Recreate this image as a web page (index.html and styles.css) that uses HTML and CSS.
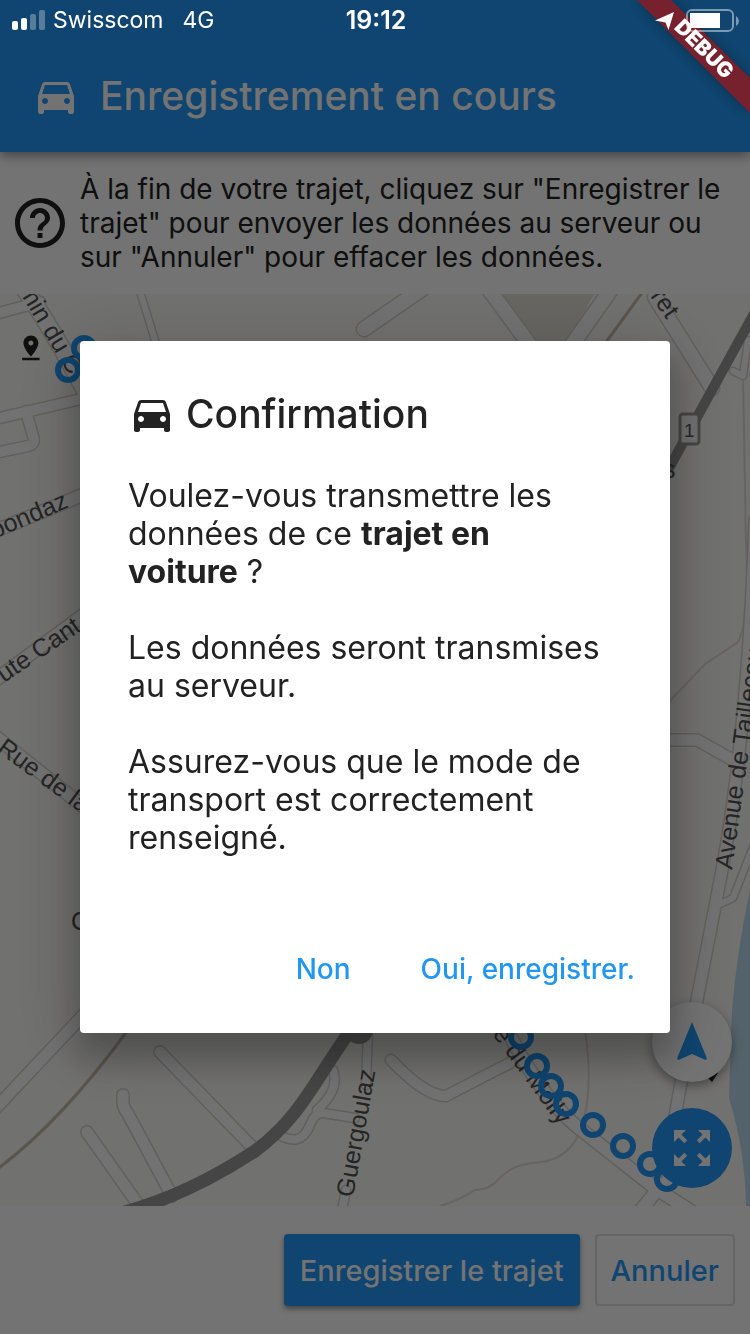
FILE: index.html
```html
<!DOCTYPE html>
<html lang="fr">
<head>
<meta charset="utf-8">
<meta name="viewport" content="width=device-width, initial-scale=1">
<title>Enregistrement en cours</title>
<link rel="stylesheet" href="styles.css">
</head>
<body>
<svg class="symbols" aria-hidden="true">
  <symbol id="car" viewBox="0 0 24 24"><path d="M18.92 6.01C18.72 5.42 18.16 5 17.5 5h-11c-.66 0-1.21.42-1.42 1.01L3 12v8c0 .55.45 1 1 1h1c.55 0 1-.45 1-1v-1h12v1c0 .55.45 1 1 1h1c.55 0 1-.45 1-1v-8l-2.08-5.99zM6.5 16c-.83 0-1.5-.67-1.5-1.5S5.67 13 6.5 13s1.5.67 1.5 1.5S7.33 16 6.5 16zm11 0c-.83 0-1.5-.67-1.5-1.5s.67-1.5 1.5-1.5 1.5.67 1.5 1.5-.67 1.5-1.5 1.5zM5 11l1.5-4.5h11L19 11H5z"/></symbol>
</svg>

<div class="app">
  <header class="app-bar">
    <svg class="icon"><use href="#car"/></svg>
    <h1 class="app-title">Enregistrement en cours</h1>
  </header>

  <section class="hint">
    <svg class="hint-icon" viewBox="0 0 24 24"><path d="M11 18h2v-2h-2v2zm1-16C6.48 2 2 6.48 2 12s4.48 10 10 10 10-4.48 10-10S17.52 2 12 2zm0 18c-4.41 0-8-3.59-8-8s3.59-8 8-8 8 3.59 8 8-3.59 8-8 8zm0-14c-2.21 0-4 1.79-4 4h2c0-1.1.9-2 2-2s2 .9 2 2c0 2-3 1.75-3 5h2c0-2.25 3-2.5 3-5 0-2.21-1.79-4-4-4z"/></svg>
    <p class="hint-text">À la fin de votre trajet, cliquez sur "Enregistrer le trajet" pour envoyer les données au serveur ou sur "Annuler" pour effacer les données.</p>
  </section>

  <main class="map">
    <svg class="map-canvas" viewBox="0 294 750 912" preserveAspectRatio="xMidYMid slice">
      <rect class="land" y="294" width="750" height="912"/>
      <path class="block" d="M497 294h97l-27 50h-36z"/>
      <path class="water" d="M750 890Q737 950 732 1010L729 1098Q745 1150 746 1206h4z"/>
      <path class="thin" d="M665 706 705 664 738 642Q750 620 746 540L743 376M585 1030Q594 1090 581 1130 568 1162 532 1163 510 1166 500 1178 490 1190 475 1190 460 1200 440 1206"/>
      <path class="track" d="M644 290 604 345M-4 1170Q60 1123 128 1030"/>
      <g class="street-edge">
        <path stroke-width="13" d="M-5 314 40 302M-5 419 90 397M26 411l7 25q3 8-5 10L-5 453"/>
        <path stroke-width="19" d="M22 285Q60 340 95 410"/>
        <path stroke-width="9" d="M139 288 158 350"/>
        <path stroke-width="17" d="M364 329 435 280M488 288 532 348M612 288 572 345M655 297 712 388"/>
        <path stroke-width="15" d="M-10 533 90 492M-10 684 90 610M-10 732 90 812"/>
        <path stroke-width="14" d="M-8 1112 90 1008"/>
        <path stroke-width="14" d="M160 1052 255 1150M123 1095v7q0 5 5 12L172 1196M87 1132 142 1210"/>
        <path stroke-width="11" d="M275 1132Q300 1150 310 1125 315 1112 323 1113L355 1118M317 1110Q340 1090 333 1070M368 1030 366 1085M341 1215 346 1190"/>
        <path stroke-width="13" d="M391 1060Q425 1096 446 1096 465 1086 510 1063"/>
        <path stroke-width="15" d="M500 1015Q535 1090 575 1125L655 1188 705 1220M662 1184 637 1215"/>
        <path stroke-width="14" d="M755 520Q748 730 722 870L697 1000 681 1083Q670 1140 668 1180M660 740H697L733 760"/>
        <path stroke-width="9" d="M755 842 733 898 720 904M748 340 743 376 733 371"/>
      </g>
      <g class="street-fill">
        <path stroke-width="10" d="M-5 314 40 302M-5 419 90 397M26 411l7 25q3 8-5 10L-5 453"/>
        <path stroke-width="16" d="M22 285Q60 340 95 410"/>
        <path stroke-width="6" d="M139 288 158 350"/>
        <path stroke-width="14" d="M364 329 435 280M488 288 532 348M612 288 572 345M655 297 712 388"/>
        <path stroke-width="12" d="M-10 533 90 492M-10 684 90 610M-10 732 90 812"/>
        <path stroke-width="11" d="M-8 1112 90 1008"/>
        <path stroke-width="11" d="M160 1052 255 1150M123 1095v7q0 5 5 12L172 1196M87 1132 142 1210"/>
        <path stroke-width="8" d="M275 1132Q300 1150 310 1125 315 1112 323 1113L355 1118M317 1110Q340 1090 333 1070M368 1030 366 1085M341 1215 346 1190"/>
        <path stroke-width="10" d="M391 1060Q425 1096 446 1096 465 1086 510 1063"/>
        <path stroke-width="12" d="M500 1015Q535 1090 575 1125L655 1188 705 1220M662 1184 637 1215"/>
        <path stroke-width="11" d="M755 520Q748 730 722 870L697 1000 681 1083Q670 1140 668 1180M660 740H697L733 760"/>
        <path stroke-width="6" d="M755 842 733 898 720 904M748 340 743 376 733 371"/>
      </g>
      <path class="main-road" d="M756 310 668 470"/>
      <path class="main-road wide" d="M125 1212Q190 1194 255 1151C300 1118 315 1080 348 1034"/>
      <circle class="junction" cx="359" cy="1030" r="14"/>
      <rect class="shield" x="680" y="414" width="19" height="30" rx="3"/>
      <text class="shield-text" x="684" y="437">1</text>
      <g class="street-name">
        <text transform="translate(18 290) rotate(59)">min du C</text>
        <text transform="translate(650 296) rotate(55)">ret</text>
        <text transform="translate(-6 539) rotate(-23)">pondaz</text>
        <text transform="translate(4 683) rotate(-34)">ute Cant</text>
        <text transform="translate(-4 751) rotate(36)">Rue de la</text>
        <text transform="translate(71 930)">C</text>
        <text transform="translate(353 1198) rotate(-80)">Guergoulaz</text>
        <text transform="translate(492 1034) rotate(54)">e du Molly</text>
        <text transform="translate(732 870) rotate(-82)">Avenue de Taillecou</text>
        <text transform="translate(663 478)">s</text>
      </g>
      <g class="trace">
        <circle cx="84" cy="348" r="10"/><circle cx="68" cy="370" r="10"/>
        <circle cx="521" cy="1037" r="10"/><circle cx="537" cy="1066" r="10"/>
        <circle cx="551" cy="1086" r="10"/><circle cx="566" cy="1104" r="10"/>
        <circle cx="593" cy="1125" r="10"/><circle cx="623" cy="1146" r="10"/>
        <circle cx="650" cy="1164" r="10"/><circle cx="667" cy="1179" r="10"/>
      </g>
      <path class="marker" transform="translate(16 333) scale(1.24)" d="M18 8c0-3.31-2.69-6-6-6S6 4.69 6 8c0 4.5 6 11 6 11s6-6.5 6-11zm-8 0c0-1.1.9-2 2-2s2 .9 2 2-.89 2-2 2c-1.1 0-2-.9-2-2zM5 20v2h14v-2H5z"/>
      <path class="marker" d="M708 1078l4 4 6-9-4-3z"/>
    </svg>
    <div class="map-tools">
      <button class="round-button light" aria-label="Recentrer"><svg class="icon" viewBox="0 0 24 24"><path d="M12 2L4.5 20.29l.71.71L12 18l6.79 3 .71-.71z"/></svg></button>
      <button class="round-button" aria-label="Agrandir"><svg class="icon" viewBox="0 0 24 24"><path d="M15 3l2.3 2.3-2.89 2.87 1.42 1.42L18.7 6.7 21 9V3zM3 9l2.3-2.3 2.87 2.89 1.42-1.42L6.7 5.3 9 3H3zm6 12l-2.3-2.3 2.89-2.87-1.42-1.42L5.3 17.3 3 15v6zm12-6l-2.3 2.3-2.87-2.89-1.42 1.42 2.89 2.87L15 21h6z"/></svg></button>
    </div>
  </main>

  <footer class="actions">
    <button class="button primary">Enregistrer le trajet</button>
    <button class="button outlined">Annuler</button>
  </footer>
</div>

<div class="overlay">
  <section class="dialog" role="dialog" aria-modal="true" aria-labelledby="dialog-title">
    <div class="dialog-head">
      <svg class="icon"><use href="#car"/></svg>
      <h2 class="dialog-title" id="dialog-title">Confirmation</h2>
    </div>
    <div class="dialog-body">
      <p>Voulez-vous transmettre les données de ce <strong>trajet en voiture</strong> ?</p>
      <p>Les données seront transmises au serveur.</p>
      <p>Assurez-vous que le mode de transport est correctement renseigné.</p>
    </div>
    <div class="dialog-actions">
      <button class="text-button">Non</button>
      <button class="text-button">Oui, enregistrer.</button>
    </div>
  </section>
</div>

<svg class="ribbon" viewBox="0 0 130 130">
  <path class="ribbon-shadow" d="M17 0h34l79 79v34z"/>
  <path class="ribbon-band" d="M17 0h34l79 78v35z"/>
  <text class="ribbon-text" transform="translate(79 54) rotate(45)">DEBUG</text>
</svg>

<div class="status-bar">
  <div class="status-left">
    <svg class="signal" viewBox="0 0 34 22"><rect y="12" width="6" height="9" rx="2"/><rect x="9" y="9" width="6" height="12" rx="2"/><rect class="faint" x="18" y="5" width="6" height="16" rx="2"/><rect class="faint" x="27" y="1" width="6" height="20" rx="2"/></svg>
    <span>Swisscom</span>
    <span class="network">4G</span>
  </div>
  <time class="clock">19:12</time>
  <svg class="status-right" viewBox="0 0 90 30">
    <path d="M5 15.500 24 7 18.500 25 15.500 17.500z"/>
    <rect class="battery-case" x="37" y="5" width="46" height="21" rx="5"/>
    <rect x="40" y="8" width="30" height="15"/>
    <path class="battery-tip" d="M86 11q3 2 3 5t-3 5z"/>
  </svg>
</div>
</body>
</html>
```

FILE: styles.css
```css
* { box-sizing: border-box; }

body {
  margin: 0;
  background: #fafafa;
  color: #222;
  font-family: Inter, Roboto, "Liberation Sans", sans-serif;
}

h1, h2, p { margin: 0; }

button {
  padding: 0;
  border: 0;
  background: none;
  font: inherit;
  cursor: pointer;
}

.symbols { position: absolute; width: 0; height: 0; }

.icon {
  flex: none;
  width: 48px;
  height: 48px;
  fill: currentColor;
}

.app {
  display: flex;
  flex-direction: column;
  min-height: 100vh;
}

.app-bar {
  display: flex;
  align-items: center;
  gap: 20px;
  padding: 40px 32px 0;
  height: 152px;
  background: #2196f3;
  color: #fafafa;
  box-shadow: 0 4px 10px rgba(0, 0, 0, .4);
  z-index: 1;
}

.app-title { font-size: 39px; font-weight: 500; line-height: 48px; }

.hint {
  display: flex;
  align-items: center;
  gap: 10px;
  padding: 20px 10px;
}

.hint-icon { flex: none; width: 60px; height: 60px; fill: #222; }

.hint-text { font-size: 28px; line-height: 34px; }

.map {
  position: relative;
  flex: 1;
  min-height: 400px;
  overflow: hidden;
}

.map-canvas { position: absolute; inset: 0; width: 100%; height: 100%; }

.land { fill: #f7f6f1; }
.block { fill: #e2ded4; }
.water { fill: #b8d8e9; }
.thin { fill: none; stroke: #dddad2; stroke-width: 2; }
.track { fill: none; stroke: #c3b9a9; stroke-width: 3; }
.street-edge { fill: none; stroke: #d2d0cb; stroke-linecap: round; stroke-linejoin: round; }
.street-fill { fill: none; stroke: #f9f9fa; stroke-linecap: round; stroke-linejoin: round; }
.main-road { fill: none; stroke: #979797; stroke-width: 10; }
.main-road.wide { stroke-width: 13; }
.junction { fill: #979797; }
.shield { fill: #f4f4f4; stroke: #979797; stroke-width: 3; }
.shield-text { fill: #555; font: 19px "Liberation Sans", Arial, sans-serif; }
.street-name { fill: #505050; font: 25px "Liberation Sans", Arial, sans-serif; }
.trace { fill: none; stroke: #2196f3; stroke-width: 6; }
.marker { fill: #222; }

.map-tools {
  position: absolute;
  right: 18px;
  bottom: 18px;
  display: flex;
  flex-direction: column;
  gap: 26px;
}

.round-button {
  display: grid;
  place-items: center;
  width: 80px;
  height: 80px;
  border-radius: 50%;
  background: #2196f3;
  color: #fafafa;
}

.round-button.light {
  background: #fafafa;
  color: #2196f3;
  box-shadow: 0 4px 12px rgba(0, 0, 0, .4);
}

.actions {
  display: flex;
  justify-content: flex-end;
  gap: 15px;
  padding: 28px 15px;
}

.button {
  height: 72px;
  padding: 0 16px;
  border-radius: 4px;
  font-size: 29px;
  font-weight: 500;
}

.button.primary {
  background: #2196f3;
  color: #fafafa;
  box-shadow: 0 3px 5px rgba(0, 0, 0, .4);
}

.button.outlined {
  padding: 0 14px;
  border: 2px solid #dcdcdc;
  color: #2196f3;
}

.overlay {
  position: fixed;
  inset: 0;
  z-index: 2;
  display: grid;
  align-items: center;
  padding: 40px 80px 0;
  background: rgba(0, 0, 0, .54);
}

.dialog {
  padding: 48px 35px 28px 48px;
  border-radius: 4px;
  background: #fff;
  box-shadow: 0 22px 30px 6px rgba(0, 0, 0, .2), 0 12px 70px 12px rgba(0, 0, 0, .14);
}

.dialog-head { display: flex; align-items: center; gap: 10px; }

.dialog-title { font-size: 39px; font-weight: 500; line-height: 50px; }

.dialog-body {
  display: grid;
  gap: 38px;
  padding: 38px 32px 76px 0;
  font-size: 32px;
  line-height: 38px;
}

.dialog-actions { display: flex; justify-content: flex-end; gap: 70px; }

.text-button {
  height: 72px;
  color: #2196f3;
  font-size: 28px;
  font-weight: 500;
}

.ribbon {
  position: fixed;
  top: 0;
  right: 0;
  z-index: 3;
  width: 130px;
  height: 130px;
}

.ribbon-shadow { fill: #000; opacity: .3; filter: blur(7px); }
.ribbon-band { fill: #76212d; }
.ribbon-text {
  fill: #fff;
  font-size: 21px;
  font-weight: 900;
  text-anchor: middle;
}

.status-bar {
  position: fixed;
  inset: 0 0 auto;
  z-index: 4;
  display: grid;
  grid-template-columns: 1fr auto 1fr;
  align-items: center;
  height: 40px;
  padding: 0 10px 0 12px;
  color: #fff;
  font-size: 23px;
}

.status-left { display: flex; align-items: center; gap: 7px; }
.network { margin-left: 12px; }
.signal { width: 34px; height: 22px; fill: #fff; }
.faint { opacity: .3; }
.clock { font-size: 25px; font-weight: 600; }

.status-right {
  justify-self: end;
  width: 90px;
  height: 30px;
  fill: #fff;
}

.battery-case { fill: none; stroke: #fff; stroke-width: 2; opacity: .45; }
.battery-tip { opacity: .45; }
```
